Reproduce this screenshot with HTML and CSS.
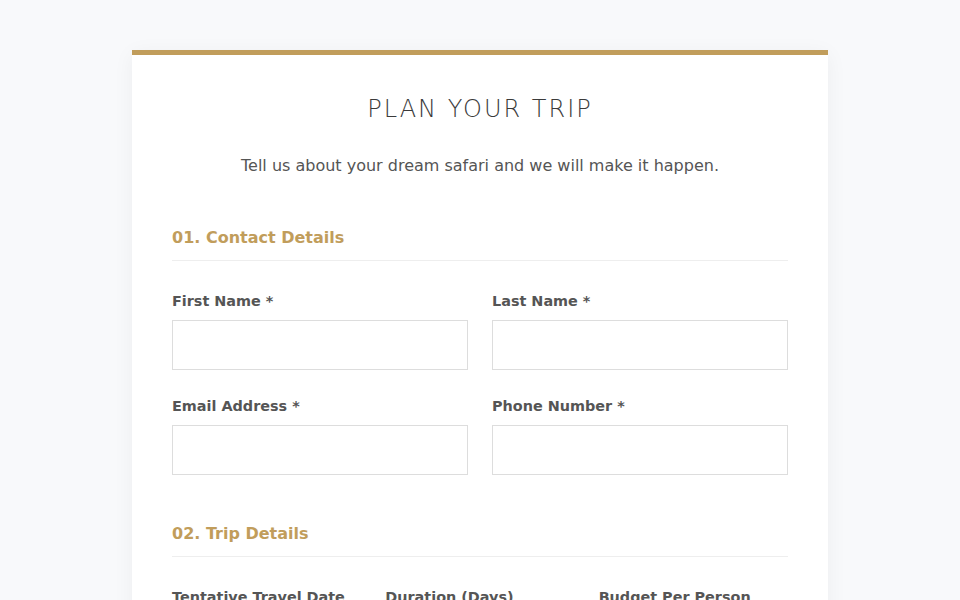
FILE: index.html
```html
<!DOCTYPE html>
<html lang="en">
<head>
    <meta charset="UTF-8">
    <meta name="viewport" content="width=device-width, initial-scale=1.0">
    <title>Plan Your Trip</title>
    <link rel="stylesheet" href="styles.css">
</head>
<body>
    <div class="container">
        <h1>Plan Your Trip</h1>
        <p class="intro">Tell us about your dream safari and we will make it happen.</p>

        <form id="tripForm">
            <div class="section">
                <h2>01. Contact Details</h2>
                <div class="row two">
                    <div class="form-group">
                        <label for="firstName">First Name *</label>
                        <input type="text" id="firstName" required>
                    </div>
                    <div class="form-group">
                        <label for="lastName">Last Name *</label>
                        <input type="text" id="lastName" required>
                    </div>
                </div>
                <div class="row two">
                    <div class="form-group">
                        <label for="email">Email Address *</label>
                        <input type="text" id="email" required>
                    </div>
                    <div class="form-group">
                        <label for="phone">Phone Number *</label>
                        <input type="text" id="phone" required>
                    </div>
                </div>
            </div>

            <div class="section">
                <h2>02. Trip Details</h2>
                <div class="row three">
                    <div class="form-group">
                        <label for="travelDate">Tentative Travel Date</label>
                        <input type="text" id="travelDate">
                    </div>
                    <div class="form-group">
                        <label for="duration">Duration (Days)</label>
                        <input type="text" id="duration">
                    </div>
                    <div class="form-group">
                        <label for="budget">Budget Per Person</label>
                        <input type="text" id="budget">
                    </div>
                </div>
            </div>
        </form>
    </div>
</body>
</html>
```

FILE: styles.css
```css
body {
    font-family: 'DejaVu Sans', Verdana, sans-serif;
    margin: 0;
    padding: 50px 0;
    background-color: #f8f9fb;
}

.container {
    width: 616px;
    margin: 0 auto;
    background: white;
    padding: 40px;
    border-top: 5px solid #c19d5b;
    box-shadow: 0 4px 20px rgba(0,0,0,0.05);
}

h1 {
    font-weight: 200;
    font-size: 24px;
    letter-spacing: 2px;
    text-transform: uppercase;
    text-align: center;
    color: #3a3a3a;
    margin: 0 0 33px;
}

.intro {
    text-align: center;
    font-size: 16px;
    color: #555;
    margin: 0 0 53px;
}

.section {
    margin-bottom: 21px;
}

h2 {
    color: #c19d5b;
    font-size: 16px;
    font-weight: bold;
    margin: 0 0 32px;
    padding-bottom: 13px;
    border-bottom: 1px solid #eee;
}

.row {
    display: grid;
    gap: 24px;
}

.row.two {
    grid-template-columns: 1fr 1fr;
}

.row.three {
    grid-template-columns: 1fr 1fr 1fr;
}

.form-group {
    margin-bottom: 28px;
}

label {
    display: block;
    margin-bottom: 11px;
    font-weight: bold;
    font-size: 14.4px;
    color: #555;
}

input[type="text"] {
    width: 100%;
    height: 50px;
    padding: 12px;
    border: 1px solid #ddd;
    font-size: 15px;
    box-sizing: border-box;
    font-family: inherit;
}

input[type="text"]:focus {
    border-color: #c19d5b;
    outline: none;
}
```
